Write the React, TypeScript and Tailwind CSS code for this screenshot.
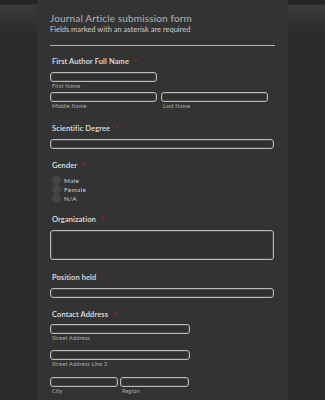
import React from "react";

const font = { fontFamily: "Lato, 'DejaVu Sans', sans-serif" };

function Label({ text, req = true }: { text: string; req?: boolean }) {
  return (
    <div className="h-[10px] pl-[2px] text-[7.5px] leading-[10px] font-semibold tracking-[0.1px] text-[#e2e2e2] flex items-start">
      <span>{text}</span>
      {req && <span className="ml-[5px] text-[#d01414] text-[7px]">*</span>}
    </div>
  );
}

function Input({ w, h = "h-[10px]" }: { w: string; h?: string }) {
  return (
    <div
      className={`${w} ${h} rounded-[3px] border border-[#b8b8b8] bg-[#303030] shadow-[inset_0_0_0_1px_#4a4a4a]`}
    />
  );
}

function Sub({ text }: { text: string }) {
  return (
    <div className="pl-[2px] text-[5.5px] leading-[7px] tracking-[0.2px] text-[#b0b0b0]">{text}</div>
  );
}

function Radio({ text }: { text: string }) {
  return (
    <div className="flex items-center h-[9px]">
      <div className="ml-[2px] w-[9px] h-[9px] rounded-full bg-[#444444]" />
      <span className="ml-[3px] text-[6.5px] leading-[9px] tracking-[0.3px] text-[#cfcfcf]">{text}</span>
    </div>
  );
}

export default function App() {
  return (
    <div
      className="min-h-screen w-[325px] bg-[#2b2b2b] bg-[linear-gradient(to_bottom,#242424_0px,#242424_4px,#3a3a3a_5px,#2e2e2e_28px,#2b2b2b_40px)]"
      style={font}
    >
      <div className="mx-auto w-[251px] min-h-[400px] bg-[#333333] pl-[13px] pr-[14px] pt-[12px] pb-[20px]">
        <div className="text-[10px] leading-[12px] tracking-[0.15px] text-[#b5b5b5]">
          Journal Article submission form
        </div>
        <div className="mt-[1px] text-[7.5px] leading-[10px] tracking-[0px] text-[#cccccc]">
          Fields marked with an asterisk are required
        </div>
        <div className="mt-[10px] h-px w-[225px] bg-[#b0b0b0]" />

        <div className="mt-[11px]">
          <Label text="First Author Full Name" />
          <div className="mt-[5px]">
            <Input w="w-[107px]" />
          </div>
          <div className="mt-[1px]">
            <Sub text="First Name" />
          </div>
          <div className="mt-[2px] flex gap-[4px]">
            <div>
              <Input w="w-[107px]" />
              <div className="mt-[1px]">
                <Sub text="Middle Name" />
              </div>
            </div>
            <div>
              <Input w="w-[107px]" />
              <div className="mt-[1px]">
                <Sub text="Last Name" />
              </div>
            </div>
          </div>
        </div>

        <div className="mt-[14px]">
          <Label text="Scientific Degree" />
          <div className="mt-[5px]">
            <Input w="w-[224px]" />
          </div>
        </div>

        <div className="mt-[12px]">
          <Label text="Gender" />
          <div className="mt-[5px] flex flex-col">
            <Radio text="Male" />
            <Radio text="Female" />
            <Radio text="N/A" />
          </div>
        </div>

        <div className="mt-[12px]">
          <Label text="Organization" />
          <div className="mt-[5px]">
            <Input w="w-[224px]" h="h-[30px]" />
          </div>
        </div>

        <div className="mt-[13px]">
          <Label text="Position held" req={false} />
          <div className="mt-[5px]">
            <Input w="w-[224px]" />
          </div>
        </div>

        <div className="mt-[12px]">
          <Label text="Contact Address" />
          <div className="mt-[4px]">
            <Input w="w-[140px]" />
          </div>
          <div className="mt-[1px]">
            <Sub text="Street Address" />
          </div>
          <div className="mt-[8px]">
            <Input w="w-[140px]" />
          </div>
          <div className="mt-[1px]">
            <Sub text="Street Address Line 2" />
          </div>
          <div className="mt-[9px] flex gap-[2px]">
            <div>
              <Input w="w-[68px]" />
              <div className="mt-[1px]">
                <Sub text="City" />
              </div>
            </div>
            <div>
              <Input w="w-[69px]" />
              <div className="mt-[1px]">
                <Sub text="Region" />
              </div>
            </div>
          </div>
        </div>
      </div>
    </div>
  );
}
